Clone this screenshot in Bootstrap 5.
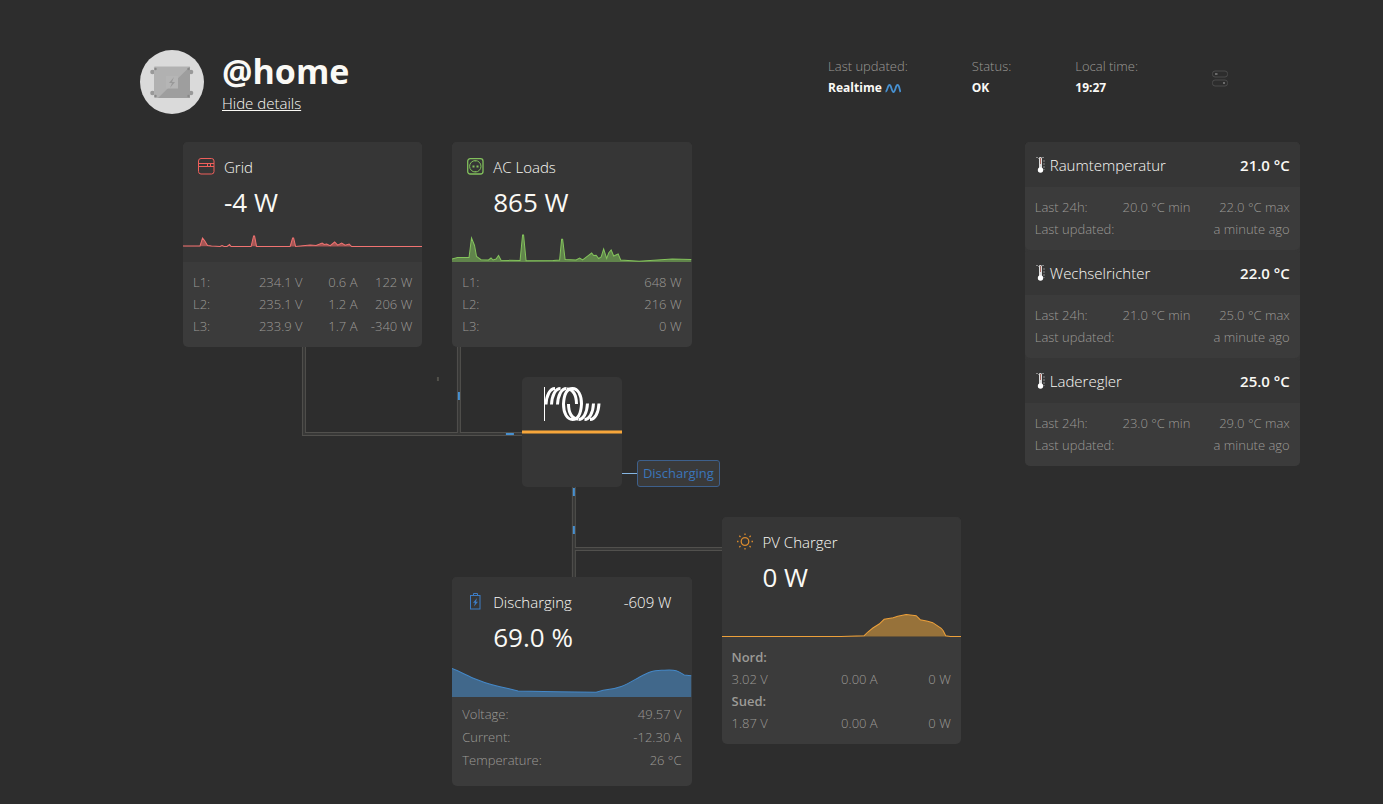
<!DOCTYPE html>
<html lang="en">
<head>
<meta charset="utf-8">
<meta name="viewport" content="width=device-width, initial-scale=1">
<title>@home</title>
<link href="https://cdn.jsdelivr.net/npm/bootstrap@5.3.0/dist/css/bootstrap.min.css" rel="stylesheet">
<style>
body{background:#2d2d2d;color:#faf9f5;font-family:"Open Sans","Noto Sans",sans-serif;font-size:13px;line-height:22px;font-weight:300}
.page{padding:50px 83px 18px 140px}
.site-title{font-size:34px;line-height:42px;font-weight:700}
.site-link{font-size:15px;line-height:22px;color:inherit}
.muted-text{color:#9c9a96}
.stats{gap:64px;line-height:21px;margin-right:72px;padding-top:6px}
.stats dt{font-weight:300}
.stats dd{font-size:12px;font-weight:700}
.device-item{padding:14px 0 0 10px}
.identity{gap:18px}
.dashboard{margin-top:28px;gap:64px;padding-left:43px}
.diagram{min-width:600px}
.diagram-cols{display:grid;grid-template-columns:repeat(3,minmax(0,1fr));gap:30px}
.tile{background:#3b3b3b;border-radius:5px;overflow:hidden}
.tile-head{background:#363636;padding-top:14px}
.tile-title{font-size:15px;line-height:22px;padding:0 20px 0 15px}
.tile-icon{width:26px}
.tile-icon svg{display:block;margin-top:2px}
.tile-value{font-size:26px;line-height:36px;font-weight:400;padding-left:41px;margin:6px 0 12px}
.chart{display:block;width:100%;height:30px}
.readings{color:#9c9a96;padding:9px 10px 10px}
.readings table{width:100%;table-layout:fixed}
.readings td,.readings th{padding:0;font-weight:300;white-space:nowrap}
.readings .tracker{font-weight:600}
.readings .max-col{width:39%}
.roomy{padding:6px 10px 14px;line-height:23px}
.inverter{width:100px;height:110px;background:#363636;border-radius:5px;margin:30px 0 90px}
.inverter-bar{height:4px;background:#f7a63b;border:solid #997037;border-width:1px 0}
.inverter-logo{height:53px;padding:9px 0 0 21px}
.state{top:83px;left:100%}
.state-lead{width:15px;height:1px;background:#86b6e2}
.state-tag{border:1px solid #3e608c;border-radius:3px;background:#3a3a3a;color:#3b76bb;padding:1px 5px 2px;white-space:nowrap;font-weight:400}
.sensors{width:275px;background:#363636;border-radius:5px}
.sensor-head{background:#363636;padding:0 10px;height:45px;font-size:15px}
.pv-col{margin-top:375px}
</style>
</head>
<body>
<div class="page">
<header class="d-flex align-items-start">
  <div class="d-flex identity">
    <svg width="64" height="64" viewBox="0 0 64 64" aria-hidden="true"><circle cx="32" cy="32" r="32" fill="#dadada"/><g fill="#999"><circle cx="12.500" cy="22" r="2.300"/><circle cx="51" cy="22" r="2.300"/><circle cx="12.500" cy="43" r="2.300"/><circle cx="51" cy="43" r="2.300"/></g><rect x="14" y="16.500" width="36" height="31.500" rx="1" fill="#b1b1b1"/><path d="M50 16.500V48H18Z" fill="#9e9e9e"/><rect x="26" y="26" width="12" height="12.500" fill="#b5b5b5"/><path d="M34 27l-5 6h3l-2 5 5-6h-3z" fill="#999"/><g fill="#888"><circle cx="15.500" cy="19" r="1.200"/><circle cx="48.500" cy="19" r="1.200"/><circle cx="15.500" cy="46" r="1.200"/><circle cx="48.500" cy="46" r="1.200"/></g></svg>
    <div><h1 class="site-title m-0">@home</h1><a class="site-link d-block" href="#details">Hide details</a></div>
  </div>
  <dl class="stats d-flex ms-auto mb-0">
    <div><dt class="muted-text">Last updated:</dt><dd class="mb-0 text-nowrap">Realtime <svg width="16" height="9" viewBox="0 0 16 9" fill="none" stroke="#4790d0" stroke-width="1.800" aria-hidden="true"><path d="M.5 7.500C2.500 7.500 2.500 1 4.500 1s2 7 4 7 2-7 4-7 2 5 3 7"/></svg></dd></div>
    <div><dt class="muted-text">Status:</dt><dd class="mb-0">OK</dd></div>
    <div><dt class="muted-text">Local time:</dt><dd class="mb-0">19:27</dd></div>
    <div class="device-item"><button type="button" class="btn p-0 border-0 d-block" aria-label="Devices"><svg class="d-block" width="16" height="17" viewBox="0 0 16 17" fill="none" stroke="#4b4b4b"><rect x=".5" y="1" width="15" height="6" rx="2.500"/><rect x=".5" y="10" width="15" height="6" rx="2.500"/><path d="M3 4h2.500M11 13h2" stroke="#aaa"/></svg></button></div>
  </dl>
</header>

<main id="details" class="dashboard d-flex align-items-start">
  <section class="diagram position-relative flex-grow-1">
    <svg class="position-absolute top-0 start-0 w-100 h-100" viewBox="0 0 778 644" preserveAspectRatio="none" fill="none" aria-hidden="true">
      <g stroke="#51504d" stroke-width="4"><path d="M121 200V292H345M276 200V292M391 340V440M391 407H545"/></g>
      <g stroke="#383837" stroke-width="2"><path d="M121 200V292H345M276 200V292M391 340V440M391 407H545"/></g>
      <path d="M276 250v8M323 292h8M391 346v8M391 384v8" stroke="#4790d0" stroke-width="2"/>
      <path d="M255 235v4" stroke="#52514b" stroke-width="2"/>
    </svg>
    <div class="diagram-cols position-relative">
      <div>
        <article class="tile">
          <div class="tile-head">
            <div class="tile-title d-flex"><span class="tile-icon"><svg width="17" height="17" viewBox="0 0 17 17" fill="none" stroke="#ee5f5b" aria-hidden="true"><rect x=".5" y=".5" width="15.500" height="15.500" rx="2.500"/><path d="M.5 5.500H16M.5 8.500H16M9.500 5.500v3M12.500 5.500v3"/></svg></span><span>Grid</span></div>
            <div class="tile-value">-4 W</div>
            <svg class="chart" viewBox="0 0 239 30" preserveAspectRatio="none"><path fill="#a55554" stroke="#f17371" d="M0 14H17L19.500 6 21.500 8.500 24.500 13.500 28.500 14 37 14.500 39 13.500 41 14.500H44L46.500 12.500 48 14.500H68L70.500 4H71.500L73.500 14.500H107L109.500 6H110.500L112.500 14.500 127 13 133 13.500 139 11 141 12.500 143.500 12 147 13.700 151.500 10 154.500 13.200 158.500 11 162 13.200 166 12 168.500 14.500H239"/></svg>
          </div>
          <div class="readings"><table>
            <tr><th>L1:</th><td class="text-end">234.1 V</td><td class="text-end">0.6 A</td><td class="text-end">122 W</td></tr>
            <tr><th>L2:</th><td class="text-end">235.1 V</td><td class="text-end">1.2 A</td><td class="text-end">206 W</td></tr>
            <tr><th>L3:</th><td class="text-end">233.9 V</td><td class="text-end">1.7 A</td><td class="text-end">-340 W</td></tr>
          </table></div>
        </article>
      </div>
      <div class="d-flex flex-column">
        <article class="tile">
          <div class="tile-head">
            <div class="tile-title d-flex"><span class="tile-icon"><svg width="17" height="17" viewBox="0 0 17 17" fill="none" stroke="#82c05c" aria-hidden="true"><rect x=".7" y=".7" width="15.300" height="15.300" rx="2.500" stroke-width="1.300"/><circle cx="8.300" cy="8.300" r="5.700"/><path d="M5.500 8.500h2M9.500 8.500h2" stroke-width="1.800"/><path d="M8.300 2.500v1M8.300 13v1"/></svg></span><span>AC Loads</span></div>
            <div class="tile-value">865 W</div>
            <svg class="chart" viewBox="0 0 239 30" preserveAspectRatio="none"><path fill="#60844b" d="M0 30V27L5.500 25.500H17L19.500 6 22.500 13.500 24.500 24.500 29 27.700 36.500 28 39 26 41 28 44 27 46.500 23.500 49 28.300 68 28.500 70.500 3H71.500L74 28.700 101 28.500 107.500 28 109.500 7.300H110.500L113 27.500 124 28 127.500 26 130.500 28 139.500 21 141.500 23.500 144 23.300 146.500 26.500 149 25 151.500 17 154.500 26.500 156.500 21 159 18 161.500 24 166 22 168.500 28 187 29.300 220 27 239 27.500V30Z"/><path fill="none" stroke="#84c45c" d="M0 27L5.500 25.500H17L19.500 6 22.500 13.500 24.500 24.500 29 27.700 36.500 28 39 26 41 28 44 27 46.500 23.500 49 28.300 68 28.500 70.500 3H71.500L74 28.700 101 28.500 107.500 28 109.500 7.300H110.500L113 27.500 124 28 127.500 26 130.500 28 139.500 21 141.500 23.500 144 23.300 146.500 26.500 149 25 151.500 17 154.500 26.500 156.500 21 159 18 161.500 24 166 22 168.500 28 187 29.300 220 27 239 27.500"/></svg>
          </div>
          <div class="readings"><table>
            <tr><th>L1:</th><td class="text-end">648 W</td></tr>
            <tr><th>L2:</th><td class="text-end">216 W</td></tr>
            <tr><th>L3:</th><td class="text-end">0 W</td></tr>
          </table></div>
        </article>
        <div class="inverter align-self-center position-relative">
          <div class="inverter-logo"><svg class="d-block" width="58" height="36" viewBox="0 0 58 36" fill="none" role="img" aria-label="Victron Energy"><defs><g id="coil"><path d="M3 18.500C3.500 9 7 2.500 12 2.500"/><path d="M8.500 18.500C9 9 12.500 2.500 17.500 2.500"/><path d="M14.500 18.500C15 9 18.500 2.500 23.500 2.500"/><path d="M20.500 18C21 9 24 2.500 29.500 2.500 35 2.500 38.500 9 38.500 18"/><path d="M24 3C30 3 33.500 9 33.500 18"/></g></defs><path d="M1.500 1v34" stroke="#fff"/><g stroke="#fff" stroke-width="3"><use href="#coil"/><use href="#coil" transform="rotate(180 29.500 18)"/></g></svg></div>
          <div class="inverter-bar"></div>
          <div class="state position-absolute d-flex align-items-center"><span class="state-lead"></span><span class="state-tag">Discharging</span></div>
        </div>
        <article class="tile">
          <div class="tile-head">
            <div class="tile-title d-flex"><span class="tile-icon"><svg width="17" height="17" viewBox="0 0 17 17" fill="none" stroke="#3d7cc4" aria-hidden="true"><rect x="3.500" y="2.500" width="9.500" height="13.500"/><path d="M6.500 2.500v-2h4v2"/><path d="M10 5L6 9.700h2L7 13.500 11 8.700H9z" fill="#3d7cc4" stroke="none"/></svg></span><span>Discharging</span><span class="ms-auto">-609 W</span></div>
            <div class="tile-value">69.0 %</div>
            <svg class="chart" viewBox="0 0 239 30" preserveAspectRatio="none"><path fill="#41688b" d="M0 30V1.500C8 4.500 16 9 24 12.300S40 18.500 56 21.500L66 24 104 24.700 144 25.300 151 23.300C168 22 175 17 187 10.300S200 4 212 3.200 226 4 232 8L239 8.700V30Z"/><path fill="none" stroke="#4488c8" d="M0 1.500C8 4.500 16 9 24 12.300S40 18.500 56 21.500L66 24 104 24.700 144 25.300 151 23.300C168 22 175 17 187 10.300S200 4 212 3.200 226 4 232 8L239 8.700"/></svg>
          </div>
          <div class="readings roomy"><table>
            <tr><th>Voltage:</th><td class="text-end">49.57 V</td></tr>
            <tr><th>Current:</th><td class="text-end">-12.30 A</td></tr>
            <tr><th>Temperature:</th><td class="text-end">26 °C</td></tr>
          </table></div>
        </article>
      </div>
      <div class="pv-col">
        <article class="tile">
          <div class="tile-head">
            <div class="tile-title d-flex"><span class="tile-icon"><svg width="17" height="17" viewBox="0 0 17 17" fill="none" stroke="#d98a2d" stroke-width="1.300" aria-hidden="true"><circle cx="8" cy="8.500" r="3.800"/><path d="M8 .5v1.500M8 15v1.500M0 8.500h1.500M14.500 8.500H16M2.300 2.800l1.200 1.200M12.500 13l1.200 1.200M2.300 14.200l1.200-1.200M12.500 4l1.200-1.200"/></svg></span><span>PV Charger</span></div>
            <div class="tile-value">0 W</div>
            <svg class="chart" viewBox="0 0 239 30" preserveAspectRatio="none"><path fill="#97723a" stroke="#eda03a" d="M0 29.500H119L142 28.700 145.700 25 150.700 21 157 17 162 12.300 171 10.700 175.500 9.300 184 7.500 194 8.700 198 12.700 205.500 14.300 210.500 15.700 219 21.300 221 23.700 223.500 28.700 228 29.500H239"/></svg>
          </div>
          <div class="readings"><table>
            <tr><th class="tracker" colspan="3">Nord:</th></tr>
            <tr><td>3.02 V</td><td class="text-end">0.00 A</td><td class="text-end">0 W</td></tr>
            <tr><th class="tracker" colspan="3">Sued:</th></tr>
            <tr><td>1.87 V</td><td class="text-end">0.00 A</td><td class="text-end">0 W</td></tr>
          </table></div>
        </article>
      </div>
    </div>
  </section>

  <svg class="d-none" aria-hidden="true"><symbol id="thermo" viewBox="0 0 10 17"><path d="M0 1.500h8M8 4v10M1.500 1.500l2 2" stroke="#888" stroke-dasharray="2 1"/><rect x="3" y="1" width="3" height="12" rx="1.500" fill="#ddd"/><path d="M4.500 2v6" stroke="#a86a60"/><circle cx="4.500" cy="14" r="2.700" fill="#fff"/></symbol></svg>
  <aside class="sensors flex-shrink-0">
    <article class="tile">
      <div class="sensor-head d-flex align-items-center"><svg class="me-1" width="11" height="17" viewBox="0 0 11 17"><use href="#thermo" x="1" width="10" height="17"/></svg><span>Raumtemperatur</span><span class="ms-auto fw-semibold">21.0 °C</span></div>
      <div class="readings"><table>
        <tr><th>Last 24h:</th><td class="text-end">20.0 °C min</td><td class="text-end max-col">22.0 °C max</td></tr>
        <tr><th>Last updated:</th><td class="text-end" colspan="2">a minute ago</td></tr>
      </table></div>
    </article>
    <article class="tile">
      <div class="sensor-head d-flex align-items-center"><svg class="me-1" width="11" height="17" viewBox="0 0 11 17"><use href="#thermo" x="1" width="10" height="17"/></svg><span>Wechselrichter</span><span class="ms-auto fw-semibold">22.0 °C</span></div>
      <div class="readings"><table>
        <tr><th>Last 24h:</th><td class="text-end">21.0 °C min</td><td class="text-end max-col">25.0 °C max</td></tr>
        <tr><th>Last updated:</th><td class="text-end" colspan="2">a minute ago</td></tr>
      </table></div>
    </article>
    <article class="tile">
      <div class="sensor-head d-flex align-items-center"><svg class="me-1" width="11" height="17" viewBox="0 0 11 17"><use href="#thermo" x="1" width="10" height="17"/></svg><span>Laderegler</span><span class="ms-auto fw-semibold">25.0 °C</span></div>
      <div class="readings"><table>
        <tr><th>Last 24h:</th><td class="text-end">23.0 °C min</td><td class="text-end max-col">29.0 °C max</td></tr>
        <tr><th>Last updated:</th><td class="text-end" colspan="2">a minute ago</td></tr>
      </table></div>
    </article>
  </aside>
</main>
</div>
<script src="https://cdn.jsdelivr.net/npm/bootstrap@5.3.0/dist/js/bootstrap.bundle.min.js"></script>
</body>
</html>
